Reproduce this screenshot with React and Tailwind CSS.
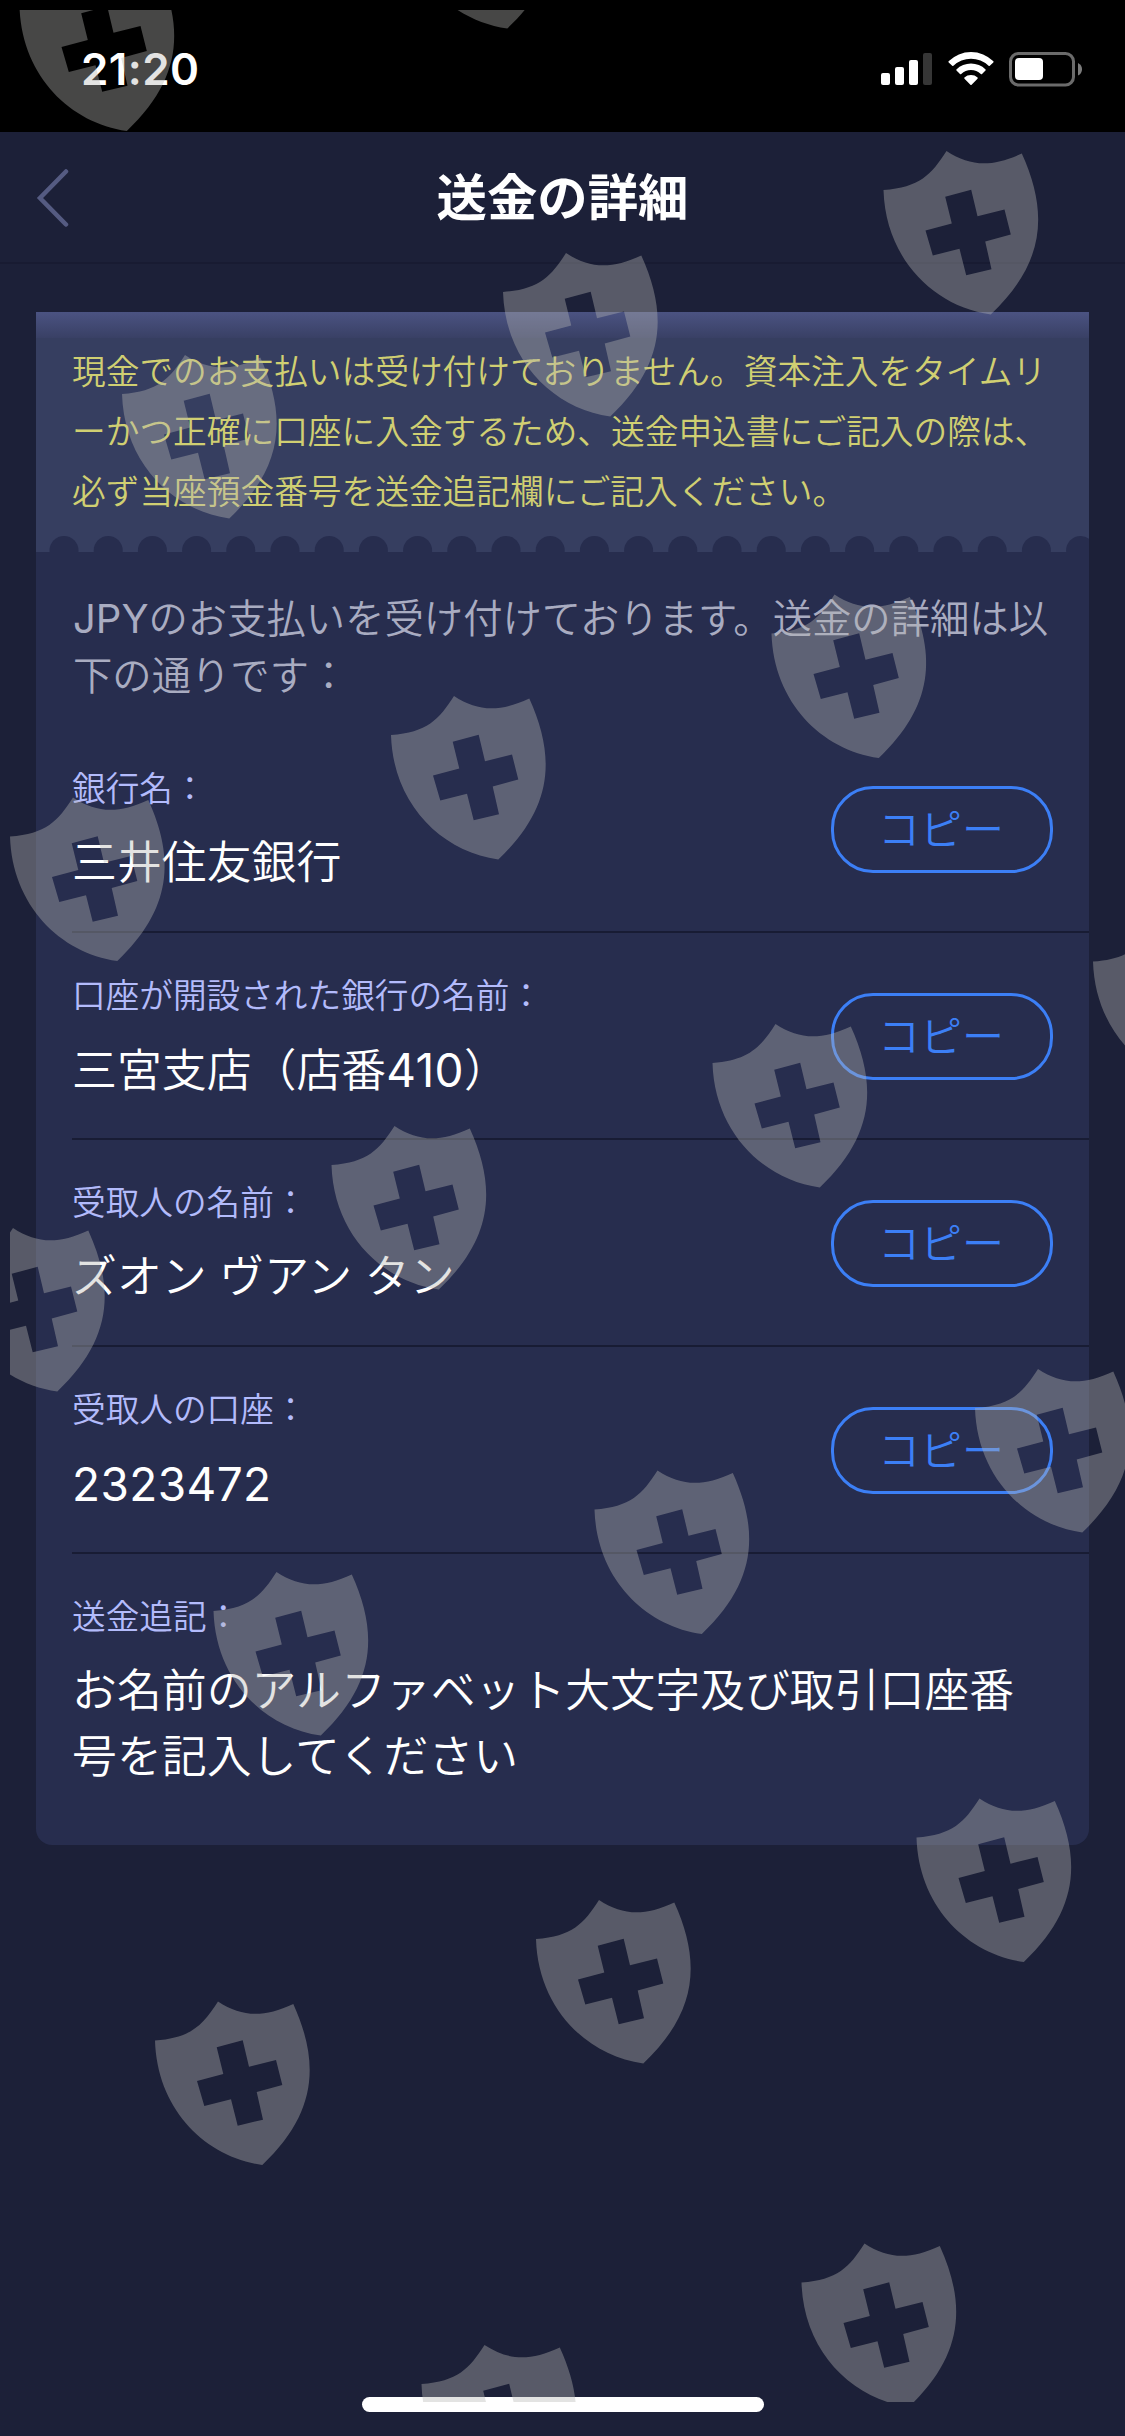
import { useState } from "react";

const rows = [
    { id: 1, label: "銀行名：", value: "三井住友銀行" },
    { id: 2, label: "口座が開設された銀行の名前：", value: "三宮支店（店番410）" },
    { id: 3, label: "受取人の名前：", value: "ズオン ヴアン タン" },
    { id: 4, label: "受取人の口座：", value: "2323472" },
];

const shields = [
    [19.5, -33], [400, -135.5],
    [883.5, 150.5], [503, 252.5], [122, 354.5],
    [771.5, 594], [391, 695.5], [10, 797],
    [1093, 922], [712.5, 1023.5], [331.5, 1125.5], [-50, 1227.5],
    [975, 1368.5], [594.5, 1470], [213.5, 1571.5],
    [916.5, 1798], [536, 1899.5], [155, 2001],
    [801.5, 2243], [421.5, 2344.5],
];

function StatusBar() {
    return (
        <div className="flex h-[132px] shrink-0 items-start justify-between bg-black pl-[81px] pr-[42px] pt-[49px]">
            <span className="text-[44px] font-semibold leading-[41px] tracking-[0.4px]">21:20</span>
            <div className="flex items-start gap-[15px] pt-[3px]">
                <svg width="52" height="34" viewBox="0 0 52 34" fill="#fff">
                    <rect x="0" y="21" width="9" height="12" rx="2" />
                    <rect x="14" y="15" width="9" height="18" rx="2" />
                    <rect x="28" y="8" width="9" height="25" rx="2" />
                    <rect x="42" y="1" width="9" height="32" rx="2" fill="#363636" />
                </svg>
                <svg width="46" height="34" viewBox="0 0 46 34" fill="#fff">
                    <path d="M0.6 9.2 A32 32 0 0 1 45.4 9.2 Q45.8 9.8 45.3 10.4 L41.8 13.8 Q41.2 14.3 40.6 13.8 A25.5 25.5 0 0 0 5.4 13.8 Q4.8 14.3 4.2 13.8 L0.7 10.4 Q0.2 9.8 0.6 9.2 Z" />
                    <path d="M8.4 17.4 A21 21 0 0 1 37.6 17.4 Q38 18 37.5 18.6 L34 22 Q33.4 22.5 32.8 22 A14.2 14.2 0 0 0 13.2 22 Q12.6 22.5 12 22 L8.5 18.6 Q8 18 8.4 17.4 Z" />
                    <path d="M16.4 25.6 A10 10 0 0 1 29.6 25.6 Q30 26.2 29.5 26.7 L23.6 32.8 Q23 33.3 22.4 32.8 L16.5 26.7 Q16 26.2 16.4 25.6 Z" />
                </svg>
                <svg width="74" height="35" viewBox="0 0 74 35">
                    <rect x="1.5" y="1.5" width="63" height="31.5" rx="8" fill="none" stroke="#6b6b6b" strokeWidth="3" />
                    <rect x="6" y="6" width="28" height="22" rx="4" fill="#fff" />
                    <path d="M69 11 Q73 13 73 17.2 Q73 21.5 69 23.5 Z" fill="#7b7b7b" />
                </svg>
            </div>
        </div>
    );
}

function Header() {
    return (
        <div className="grid h-[132px] shrink-0 grid-cols-[1fr_auto_1fr] items-center border-b-2 border-[#181b32]">
            <button className="ml-[36px] w-[36px]">
                <svg width="36" height="60" viewBox="0 0 36 60" fill="none" stroke="#555b82" strokeWidth="4.5" strokeLinecap="round">
                    <path d="M30 4.5 L4 31 L30 57.5" />
                </svg>
            </button>
            <h1 className="pt-px text-[50.4px] font-bold leading-[60px]">送金の詳細</h1>
        </div>
    );
}

function Notice() {
    const holes = Array.from({ length: 24 }, (_, i) => 28 + i * 44.2);
    return (
        <div className="h-[240px] bg-[#363e60]">
            <div className="h-[26px] bg-linear-to-b from-[#4b5382] to-[#394065]" />
            <p className="h-[198px] whitespace-nowrap pl-[36px] pt-[4px] text-[33.7px] font-[350] leading-[60px] text-[#d0cf72]">
                現金でのお支払いは受け付けておりません。資本注入をタイムリ<br />
                ーかつ正確に口座に入金するため、送金申込書にご記入の際は、<br />
                必ず当座預金番号を送金追記欄にご記入ください。
            </p>
            <svg className="block" width="1053" height="16" viewBox="0 0 1053 16" fill="#272d4e">
                {holes.map((x) => (
                    <circle key={x} cx={x} cy="14.5" r="14.5" />
                ))}
            </svg>
        </div>
    );
}

// digits sit a little heavier than the kana and kanji around them
function Value({ text }) {
    return text.split(/(\d+)/).map((part, i) => (
        /^\d+$/.test(part) ? <span key={i} className="text-[46px] font-normal tracking-[0.4px]">{part}</span> : part
    ));
}

function DetailRow({ label, value }) {
    const [copied, setCopied] = useState(false);

    const copy = async () => {
        await navigator.clipboard.writeText(value);
        setCopied(true);
    };

    return (
        <div className="ml-[36px] flex h-[207px] items-center justify-between border-b-2 border-[#181c34] pr-[36px] pt-[2px]">
            <div className="pt-[5px]">
                <p className="text-[33.65px] font-[350] leading-[40px] text-[#b3bbfb]">{label}</p>
                <p className="mt-[21px] h-[66px] text-[44.9px] font-[350] leading-[66px]">
                    <Value text={value} />
                </p>
            </div>
            <button
                onClick={copy}
                aria-pressed={copied}
                className="h-[87px] w-[222px] rounded-[42px] border-3 border-[#3c7ff6] pr-[2px] text-[42px] font-[350] leading-[60px] text-[#3c7ff6]"
            >
                コピー
            </button>
        </div>
    );
}

function Watermark() {
    return (
        <div className="pointer-events-none absolute left-[10px] top-[10px] h-[2392px] w-[1115px] overflow-hidden">
            <svg width="1115" height="2392" viewBox="10 10 1115 2392" fill="#b8b7b4" fillOpacity="0.39" fillRule="evenodd">
                {shields.map(([x, y]) => (
                    <path
                        key={`${x}-${y}`}
                        transform={`translate(${x} ${y})`}
                        d="M0 39.5 C36 37 48 24 63 0.5 C87 16 108 17 138.3 3 C165 62 162 112 107.3 164 C50 156 2 108 0 39.5 Z M61.7 46.3 L87.7 39.3 L94 65.7 L121 59 L127.3 84 L101.7 91 L108 118.7 L82.7 124.7 L76 98.3 L49.3 105 L42 80 L68.3 73 Z"
                    />
                ))}
            </svg>
        </div>
    );
}

export default function App() {
    return (
        <div
            lang="ja"
            className="relative flex h-[2436px] w-[1125px] flex-col overflow-hidden bg-[#1c2038] font-['Inter','Noto_Sans_CJK_JP',sans-serif] text-white"
        >
            <StatusBar />
            <Header />
            <main className="mx-[36px] mt-[48px] h-[1533px] overflow-hidden rounded-b-[16px] bg-[#272d4e]">
                <Notice />
                <p className="h-[174px] whitespace-nowrap pl-[37px] pt-[38px] text-[39.35px] font-[350] leading-[57px] text-[#a9acc1]">
                    <span className="text-[40px] font-normal">JPY</span>
                    のお支払いを受け付けております。送金の詳細は以<br />
                    下の通りです：
                </p>
                {rows.map((row) => (
                    <DetailRow key={row.id} label={row.label} value={row.value} />
                ))}
                <div className="pl-[36px] pt-[43px]">
                    <p className="text-[33.65px] font-[350] leading-[40px] text-[#b3bbfb]">送金追記：</p>
                    <p className="mt-[21px] whitespace-nowrap text-[44.9px] font-[350] leading-[66px]">
                        お名前のアルファベット大文字及び取引口座番<br />
                        号を記入してください
                    </p>
                </div>
            </main>
            <div className="mx-auto mb-[24px] mt-auto h-[15px] w-[402px] rounded-full bg-white" />
            <Watermark />
        </div>
    );
}
